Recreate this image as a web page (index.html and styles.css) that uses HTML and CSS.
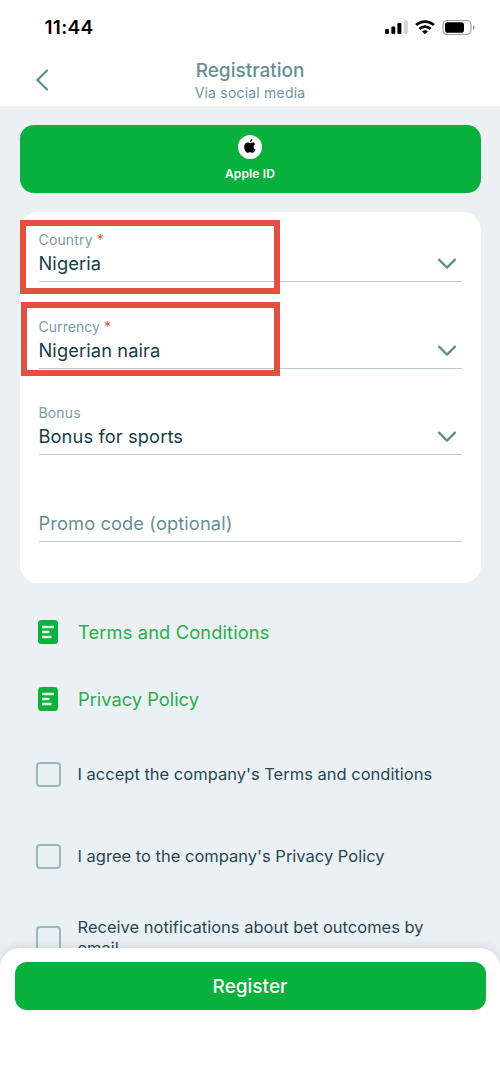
FILE: index.html
```html
<!DOCTYPE html>
<html lang="en">
<head>
<meta charset="utf-8">
<title>Registration</title>
<link rel="stylesheet" href="styles.css">
</head>
<body>
<div class="screen">
  <header class="header">
    <div class="status">
      <span class="time">11:44</span>
      <svg class="status-icons" width="92" height="18" viewBox="0 0 92 18">
        <rect x="1" y="11" width="4" height="5" rx="1.2"/>
        <rect x="7.3" y="8.6" width="4" height="7.4" rx="1.2"/>
        <rect x="13.4" y="5" width="4" height="11" rx="1.2"/>
        <rect x="19.8" y="2.2" width="4" height="13.8" rx="1.2" fill="#d3d3d3"/>
        <g fill="none" stroke="#000" stroke-width="2.8">
          <path d="M32.1 7.1a13 13 0 0 1 17.8 0"/>
          <path d="M35.4 10.9a8.2 8.2 0 0 1 11.2 0"/>
        </g>
        <path d="M38.1 13.4a4.4 4.4 0 0 1 5.8 0L41 16.3z"/>
        <rect x="59" y="2.5" width="28" height="14" rx="4.4" fill="none" stroke="#a2a2a2" stroke-width="1.2"/>
        <rect x="61" y="4.3" width="19" height="10.4" rx="2.8"/>
        <path d="M89 7.2q1.6.8 1.600 2.400T89 12z" fill="#8c8c8c"/>
      </svg>
    </div>
    <div class="nav">
      <svg class="back" width="14" height="24" viewBox="0 0 14 24"><path d="M12.600 2L2.400 12l10.200 10" fill="none" stroke="#548c92" stroke-width="2.1"/></svg>
      <div class="titles">
        <h1 class="title">Registration</h1>
        <p class="subtitle">Via social media</p>
      </div>
    </div>
  </header>

  <main class="content">
    <button class="apple">
      <svg width="24" height="24" viewBox="0 0 24 24">
        <circle cx="12" cy="12" r="12" fill="#fff"/>
        <path d="M15.6 11.5c0-1.3.8-2.1 1.6-2.6-.8-1.1-2-1.3-2.6-1.3-1.1 0-1.9.6-2.5.6s-1.400-.6-2.300-.6C7.800 7.600 6.200 9.100 6.200 12c0 2.800 1.900 5.800 3.500 5.800.8 0 1.300-.6 2.400-.6s1.500.6 2.400.6c1.400 0 2.600-2 3-3.400-1.200-.5-1.900-1.600-1.900-2.900zM14.400 4c-1.500.2-2.500 1.500-2.400 3 1.500 0 2.600-1.500 2.400-3z"/>
      </svg>
      <span class="apple-label">Apple ID</span>
    </button>

    <section class="card">
      <div class="field">
        <div class="texts"><span class="label">Country <b class="req">*</b></span><span class="value">Nigeria</span></div>
        <svg class="chevron" width="20" height="12" viewBox="0 0 20 12"><path d="M2 1.600l8 8 8-8"/></svg>
        <i class="mark mark-country"></i>
      </div>
      <div class="field">
        <div class="texts"><span class="label label-currency">Currency <b class="req">*</b></span><span class="value">Nigerian naira</span></div>
        <svg class="chevron" width="20" height="12" viewBox="0 0 20 12"><path d="M2 1.600l8 8 8-8"/></svg>
        <i class="mark mark-currency"></i>
      </div>
      <div class="field">
        <div class="texts"><span class="label">Bonus</span><span class="value">Bonus for sports</span></div>
        <svg class="chevron" width="20" height="12" viewBox="0 0 20 12"><path d="M2 1.600l8 8 8-8"/></svg>
      </div>
      <div class="field">
        <div class="texts"><span class="value placeholder">Promo code (optional)</span></div>
      </div>
    </section>

    <nav class="links">
      <a class="doc doc-terms"><svg width="20" height="24" viewBox="0 0 20 24"><rect width="20" height="24" rx="3.500" fill="#0cb23c"/><path d="M4 7h12M4 12h7.500M4 17h9.500" stroke="#e8f5ec" stroke-width="2.400"/></svg><span>Terms and Conditions</span></a>
      <a class="doc"><svg width="20" height="24" viewBox="0 0 20 24"><rect width="20" height="24" rx="3.500" fill="#0cb23c"/><path d="M4 7h12M4 12h7.500M4 17h9.500" stroke="#e8f5ec" stroke-width="2.400"/></svg><span>Privacy Policy</span></a>
    </nav>

    <div class="checks">
      <label class="check"><span class="box"></span><span class="check-text">I accept the company's Terms and conditions</span></label>
      <label class="check"><span class="box"></span><span class="check-text">I agree to the company's Privacy Policy</span></label>
      <label class="check"><span class="box"></span><span class="check-text">Receive notifications about bet outcomes by<br>email</span></label>
    </div>
  </main>

  <footer class="footer"><button class="register">Register</button></footer>
</div>
</body>
</html>
```

FILE: styles.css
```css
* { box-sizing: border-box; }
body { margin: 0; font-family: Inter, "Liberation Sans", sans-serif; }
.screen { width: 500px; height: 1080px; display: flex; flex-direction: column; overflow: hidden; background: #ebf0f5; }
h1, p { margin: 0; font-weight: 400; }
button { border: 0; font-family: inherit; color: #fff; background: #08b13d; }

.header { height: 106px; flex: none; background: #fff; }
.status { height: 54px; display: flex; justify-content: space-between; align-items: center; padding: 0 25px 0 44.500px; }
.time { font-size: 19px; font-weight: 600; letter-spacing: 0.3px; color: #000; }
.status-icons { display: block; margin-right: -1px; }
.nav { display: grid; grid-template-columns: 60px 1fr 60px; padding: 6px 0 0; }
.back { margin: 8px 0 0 35px; }
.titles { text-align: center; }
.title { font-size: 19px; line-height: 22px; font-weight: 500; color: #648f97; }
.subtitle { font-size: 14px; line-height: 20px; margin-top: 1px; letter-spacing: 0.2px; color: #6d969e; }

.content { flex: 1; min-height: 0; padding: 19px 19.500px 0; }
.apple { width: 100%; height: 68px; border-radius: 14px; display: flex; flex-direction: column; align-items: center; padding: 10px 0 0; }
.apple-label { font-size: 12px; line-height: 16px; font-weight: 600; letter-spacing: 0.15px; margin-top: 7px; }

.card { height: 371px; margin-top: 19px; padding: 0 19px; border-radius: 18px; background: #fff; }
.field { position: relative; height: 86.700px; border-bottom: 1px solid #b9c9cf; display: flex; justify-content: space-between; align-items: flex-end; padding-bottom: 6px; }
.field:first-child { height: 70px; }
.texts { display: flex; flex-direction: column; }
.label { font-size: 14px; line-height: 18px; letter-spacing: 0.15px; color: #7e9ba6; margin-bottom: 2px; }
.label-currency { letter-spacing: 0.05px; }
.req { color: #d95353; font-weight: 400; }
.value { font-size: 18.300px; line-height: 24px; letter-spacing: 0.1px; color: #163c4a; }
.placeholder { color: #668f94; }
.chevron { margin: 0 4.500px 5px 0; fill: none; stroke: #5f8b92; stroke-width: 2.200; stroke-linecap: round; stroke-linejoin: round; }
.mark { position: absolute; border: 6px solid #e25042; height: 74px; }
.mark-country { left: -18.500px; top: 8px; width: 260px; }
.mark-currency { left: -17.500px; top: 20px; width: 259px; }

.links { margin-top: 37px; padding-left: 18.500px; display: flex; flex-direction: column; gap: 43px; }
.doc { display: flex; align-items: center; gap: 20px; height: 24px; font-size: 18.300px; color: #2eac4b; }
.doc-terms { letter-spacing: 0.13px; }

.checks { margin-top: 22px; padding-left: 16.500px; }
.check { display: flex; align-items: center; height: 82px; gap: 16.500px; }
.box { width: 25px; height: 25px; flex: none; border: 2px solid #9ab9bd; border-radius: 4px; }
.check-text { font-size: 16.500px; line-height: 21px; color: #284752; white-space: nowrap; }

.footer { position: relative; flex: none; height: 132px; padding: 14px 14.500px; border-radius: 20px 20px 0 0; background: #fff; box-shadow: 0 -2px 8px rgba(40, 65, 85, 0.14); }
.register { display: block; width: 100%; height: 48px; border-radius: 12px; font-size: 19px; font-weight: 500; }
```
